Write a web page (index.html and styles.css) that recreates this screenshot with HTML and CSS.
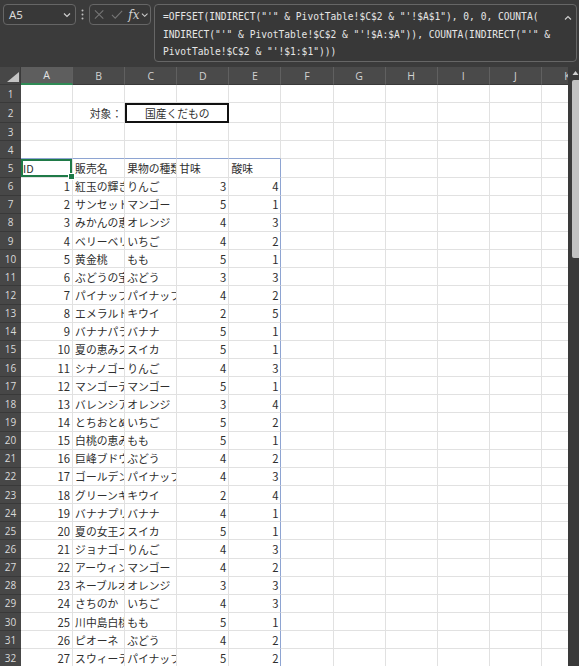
FILE: index.html
```html
<!DOCTYPE html>
<html lang="ja">
<head>
<meta charset="utf-8">
<title>Sheet</title>
<link rel="stylesheet" href="styles.css">
</head>
<body>
<div class="topbar">
  <div class="namebox">
    <span class="cellref">A5</span>
    <svg class="chev" width="8" height="6" viewBox="0 0 8 6"><path d="M1 1.5 L4 4.5 L7 1.5" fill="none" stroke="#cfcfcf" stroke-width="1.2"/></svg>
  </div>
  <svg class="vdots" width="9" height="21" viewBox="0 0 9 21"><circle cx="4.5" cy="6.5" r="1" fill="#bdbdbd"/><circle cx="4.5" cy="10.5" r="1" fill="#bdbdbd"/><circle cx="4.5" cy="14.5" r="1" fill="#bdbdbd"/></svg>
  <div class="fnbox">
    <svg class="icon-x" width="11" height="11" viewBox="0 0 11 11"><path d="M1 1 L10 10 M10 1 L1 10" stroke="#767676" stroke-width="1.1" fill="none"/></svg>
    <svg class="icon-ok" width="13" height="11" viewBox="0 0 13 11"><path d="M1 6 L4.5 9.5 L12 1.5" stroke="#767676" stroke-width="1.1" fill="none"/></svg>
    <span class="fx">fx</span>
    <svg class="chev" width="8" height="6" viewBox="0 0 8 6"><path d="M1 1.5 L4 4.5 L7 1.5" fill="none" stroke="#cfcfcf" stroke-width="1.1"/></svg>
  </div>
  <div class="formula">
    <div class="ftext">=OFFSET(INDIRECT("'" &amp; PivotTable!$C$2 &amp; "'!$A$1"), 0, 0, COUNTA(<br>INDIRECT("'" &amp; PivotTable!$C$2 &amp; "'!$A:$A")), COUNTA(INDIRECT("'" &amp;<br>PivotTable!$C$2 &amp; "'!$1:$1")))</div>
    <svg class="chev-up" width="8" height="6" viewBox="0 0 8 6"><path d="M1 4.5 L4 1.5 L7 4.5" fill="none" stroke="#cfcfcf" stroke-width="1.1"/></svg>
  </div>
</div>
<div class="sheetwrap">
  <div class="gridclip">
    <table class="sheet">
      <colgroup><col class="rh"><col class="c"><col class="c"><col class="c"><col class="c"><col class="c"><col class="c"><col class="c"><col class="c"><col class="c"><col class="c"><col class="c"></colgroup>
      <thead>
        <tr><th class="corner"><svg width="21" height="17" viewBox="0 0 21 17"><polygon points="19,5 19,15 7,15" fill="#c4c4c4"/></svg></th><th class="csel">A</th><th>B</th><th>C</th><th>D</th><th>E</th><th>F</th><th>G</th><th>H</th><th>I</th><th>J</th><th>K</th></tr>
      </thead>
      <tbody>
        <tr><th>1</th><td></td><td></td><td></td><td></td><td></td><td></td><td></td><td></td><td></td><td></td><td></td></tr>
        <tr><th>2</th><td></td><td class="r">対象：</td><td colspan="2" class="target">国産くだもの</td><td></td><td></td><td></td><td></td><td></td><td></td><td></td></tr>
        <tr><th>3</th><td></td><td></td><td></td><td></td><td></td><td></td><td></td><td></td><td></td><td></td><td></td></tr>
        <tr><th>4</th><td></td><td></td><td></td><td></td><td></td><td></td><td></td><td></td><td></td><td></td><td></td></tr>
        <tr><th>5</th><td class="sel">ID</td><td>販売名</td><td>果物の種類</td><td>甘味</td><td>酸味</td><td></td><td></td><td></td><td></td><td></td><td></td></tr>
        <tr><th>6</th><td class="n">1</td><td>紅玉の輝き</td><td>りんご</td><td class="n">3</td><td class="n">4</td><td></td><td></td><td></td><td></td><td></td><td></td></tr>
        <tr><th>7</th><td class="n">2</td><td>サンセットマンゴー</td><td>マンゴー</td><td class="n">5</td><td class="n">1</td><td></td><td></td><td></td><td></td><td></td><td></td></tr>
        <tr><th>8</th><td class="n">3</td><td>みかんの恵み</td><td>オレンジ</td><td class="n">4</td><td class="n">3</td><td></td><td></td><td></td><td></td><td></td><td></td></tr>
        <tr><th>9</th><td class="n">4</td><td>ベリーベリー</td><td>いちご</td><td class="n">4</td><td class="n">2</td><td></td><td></td><td></td><td></td><td></td><td></td></tr>
        <tr><th>10</th><td class="n">5</td><td>黄金桃</td><td>もも</td><td class="n">5</td><td class="n">1</td><td></td><td></td><td></td><td></td><td></td><td></td></tr>
        <tr><th>11</th><td class="n">6</td><td>ぶどうの宝石</td><td>ぶどう</td><td class="n">3</td><td class="n">3</td><td></td><td></td><td></td><td></td><td></td><td></td></tr>
        <tr><th>12</th><td class="n">7</td><td>パイナップルキング</td><td>パイナップル</td><td class="n">4</td><td class="n">2</td><td></td><td></td><td></td><td></td><td></td><td></td></tr>
        <tr><th>13</th><td class="n">8</td><td>エメラルドキウイ</td><td>キウイ</td><td class="n">2</td><td class="n">5</td><td></td><td></td><td></td><td></td><td></td><td></td></tr>
        <tr><th>14</th><td class="n">9</td><td>バナナパラダイス</td><td>バナナ</td><td class="n">5</td><td class="n">1</td><td></td><td></td><td></td><td></td><td></td><td></td></tr>
        <tr><th>15</th><td class="n">10</td><td>夏の恵みスイカ</td><td>スイカ</td><td class="n">5</td><td class="n">1</td><td></td><td></td><td></td><td></td><td></td><td></td></tr>
        <tr><th>16</th><td class="n">11</td><td>シナノゴールド</td><td>りんご</td><td class="n">4</td><td class="n">3</td><td></td><td></td><td></td><td></td><td></td><td></td></tr>
        <tr><th>17</th><td class="n">12</td><td>マンゴーデライト</td><td>マンゴー</td><td class="n">5</td><td class="n">1</td><td></td><td></td><td></td><td></td><td></td><td></td></tr>
        <tr><th>18</th><td class="n">13</td><td>バレンシアオレンジ</td><td>オレンジ</td><td class="n">3</td><td class="n">4</td><td></td><td></td><td></td><td></td><td></td><td></td></tr>
        <tr><th>19</th><td class="n">14</td><td>とちおとめ</td><td>いちご</td><td class="n">5</td><td class="n">2</td><td></td><td></td><td></td><td></td><td></td><td></td></tr>
        <tr><th>20</th><td class="n">15</td><td>白桃の恵み</td><td>もも</td><td class="n">5</td><td class="n">1</td><td></td><td></td><td></td><td></td><td></td><td></td></tr>
        <tr><th>21</th><td class="n">16</td><td>巨峰ブドウ</td><td>ぶどう</td><td class="n">4</td><td class="n">2</td><td></td><td></td><td></td><td></td><td></td><td></td></tr>
        <tr><th>22</th><td class="n">17</td><td>ゴールデンパイン</td><td>パイナップル</td><td class="n">4</td><td class="n">3</td><td></td><td></td><td></td><td></td><td></td><td></td></tr>
        <tr><th>23</th><td class="n">18</td><td>グリーンキウイ</td><td>キウイ</td><td class="n">2</td><td class="n">4</td><td></td><td></td><td></td><td></td><td></td><td></td></tr>
        <tr><th>24</th><td class="n">19</td><td>バナナプリンス</td><td>バナナ</td><td class="n">4</td><td class="n">1</td><td></td><td></td><td></td><td></td><td></td><td></td></tr>
        <tr><th>25</th><td class="n">20</td><td>夏の女王スイカ</td><td>スイカ</td><td class="n">5</td><td class="n">1</td><td></td><td></td><td></td><td></td><td></td><td></td></tr>
        <tr><th>26</th><td class="n">21</td><td>ジョナゴールド</td><td>りんご</td><td class="n">4</td><td class="n">3</td><td></td><td></td><td></td><td></td><td></td><td></td></tr>
        <tr><th>27</th><td class="n">22</td><td>アーウィン</td><td>マンゴー</td><td class="n">4</td><td class="n">2</td><td></td><td></td><td></td><td></td><td></td><td></td></tr>
        <tr><th>28</th><td class="n">23</td><td>ネーブルオレンジ</td><td>オレンジ</td><td class="n">3</td><td class="n">3</td><td></td><td></td><td></td><td></td><td></td><td></td></tr>
        <tr><th>29</th><td class="n">24</td><td>さちのか</td><td>いちご</td><td class="n">4</td><td class="n">3</td><td></td><td></td><td></td><td></td><td></td><td></td></tr>
        <tr><th>30</th><td class="n">25</td><td>川中島白桃</td><td>もも</td><td class="n">5</td><td class="n">1</td><td></td><td></td><td></td><td></td><td></td><td></td></tr>
        <tr><th>31</th><td class="n">26</td><td>ピオーネ</td><td>ぶどう</td><td class="n">4</td><td class="n">2</td><td></td><td></td><td></td><td></td><td></td><td></td></tr>
        <tr><th>32</th><td class="n">27</td><td>スウィーティーパイン</td><td>パイナップル</td><td class="n">5</td><td class="n">2</td><td></td><td></td><td></td><td></td><td></td><td></td></tr>
      </tbody>
    </table>
  </div>
  <div class="vscroll">
    <svg class="sc-up" width="7" height="6" viewBox="0 0 7 6"><polygon points="3.5,1 6.5,5 0.5,5" fill="#d0d0d0"/></svg>
    <div class="thumb"></div>
  </div>
</div>
</body>
</html>
```
FILE: styles.css
```css
html, body {
  margin: 0;
  padding: 0;
}
body {
  width: 579px;
  height: 666px;
  overflow: hidden;
  background: #3b3b3b;
  font-family: "Noto Sans", "Noto Sans CJK JP", sans-serif;
}

/* ---------- formula bar ---------- */
.topbar {
  height: 67px;
  box-sizing: border-box;
  padding: 4px 2px 0 3px;
  display: flex;
  align-items: flex-start;
  background: #3b3b3b;
}
.namebox {
  width: 73px;
  height: 21px;
  box-sizing: border-box;
  border: 1px solid #666;
  border-radius: 4px;
  background: #383838;
  display: flex;
  align-items: center;
  padding: 0 4px 0 5px;
}
.cellref {
  flex: 1;
  color: #d8d8d8;
  font-size: 11.5px;
  font-family: "Noto Sans", sans-serif;
}
.chev { display: block; }
.vdots {
  display: block;
  margin: 0 2px 0 2px;
}
.fnbox {
  width: 62px;
  height: 21px;
  box-sizing: border-box;
  border: 1px solid #666;
  border-radius: 4px;
  background: #383838;
  display: flex;
  align-items: center;
  padding: 0 2px 0 4px;
}
.icon-x { display: block; margin-right: 7px; }
.icon-ok { display: block; margin-right: 5px; }
.fx {
  color: #d0d0d0;
  font-family: "DejaVu Serif", "Liberation Serif", serif;
  font-style: italic;
  font-size: 12px;
  margin-right: 1px;
  line-height: 1;
}
.formula {
  margin-left: 3px;
  flex: 1;
  height: 58px;
  box-sizing: border-box;
  border: 1px solid #666;
  border-radius: 4px;
  background: #383838;
  display: flex;
  align-items: flex-start;
  padding: 3px 4px 0 8px;
}
.ftext {
  flex: 1;
  color: #e6e6e6;
  font-family: "DejaVu Sans Mono", "Liberation Mono", monospace;
  font-size: 9.6px;
  line-height: 17.6px;
  white-space: nowrap;
}
.chev-up {
  display: block;
  margin-top: 7px;
}

/* ---------- sheet ---------- */
.sheetwrap {
  display: flex;
  height: 599px;
}
.gridclip {
  width: 568px;
  height: 599px;
  overflow: hidden;
  background: #ffffff;
}
.sheet {
  table-layout: fixed;
  width: 594.1px;
  border-collapse: separate;
  border-spacing: 0;
}
col.rh { width: 21px; }
col.c { width: 52.1px; }

.sheet thead tr { height: 17px; }
.sheet thead th {
  padding: 0;
  background: #4a4a4a;
  color: #d2d2d2;
  font-family: "Open Sans", "Noto Sans", sans-serif;
  font-weight: normal;
  font-size: 10.5px;
  text-align: center;
  border-right: 1px solid #606060;
  border-bottom: 1px solid #3a3a3a;
  box-sizing: border-box;
}
.sheet thead th.corner {
  background: #474747;
  border-right: 1px solid #3a3a3a;
  vertical-align: top;
}
.sheet thead th.corner svg { display: block; }
.sheet thead th.csel {
  background: #5e5e5e;
  border-bottom: 2px solid #2f8a55;
  color: #e4e4e4;
}

.sheet tbody tr { height: 18.15px; }
.sheet tbody th {
  padding: 0;
  background: #474747;
  color: #dadada;
  font-family: "Open Sans", "Noto Sans", sans-serif;
  font-weight: normal;
  font-size: 10px;
  text-align: center;
  border-bottom: 1px solid #393939;
  box-sizing: border-box;
}
.sheet td {
  padding: 0 2px;
  border-right: 1px solid #e1e1e1;
  border-bottom: 1px solid #e1e1e1;
  font-family: "Noto Sans CJK JP", "Noto Sans", sans-serif;
  font-size: 10.8px;
  color: #2e2e2e;
  white-space: nowrap;
  overflow: hidden;
  line-height: 16px;
  vertical-align: middle;
  box-sizing: border-box;
}
.sheet td.n {
  text-align: right;
  padding-right: 2px;
  font-size: 11.3px;
}
.sheet td.r {
  text-align: right;
}
.sheet td.target {
  border: 2px solid #111;
  text-align: center;
}

/* table outline (A5:E32) */
.sheet tbody tr:nth-child(4) td:nth-child(-n+6) {
  border-bottom-color: #8ea4d2;
}
.sheet tbody tr:nth-child(n+5) td:nth-child(6) {
  border-right-color: #8ea4d2;
}

/* active cell */
.sheet td.sel {
  position: relative;
  overflow: visible;
  box-shadow: inset 0 0 0 2px #1f7a47;
}
.sheet td.sel::after {
  content: "";
  position: absolute;
  right: -3px;
  bottom: -3px;
  width: 5px;
  height: 5px;
  background: #1f7a47;
  border: 1px solid #fff;
  box-sizing: content-box;
}

/* ---------- scrollbar ---------- */
.vscroll {
  width: 11px;
  height: 599px;
  background: #3a3a3a;
  display: flex;
  flex-direction: column;
  align-items: flex-end;
}
.sc-up {
  display: block;
  margin: 3px 0 0 0;
}
.thumb {
  margin-top: 4px;
  width: 7px;
  height: 178px;
  background: #c2c2c2;
  border-radius: 2px 0 0 2px;
}
```
